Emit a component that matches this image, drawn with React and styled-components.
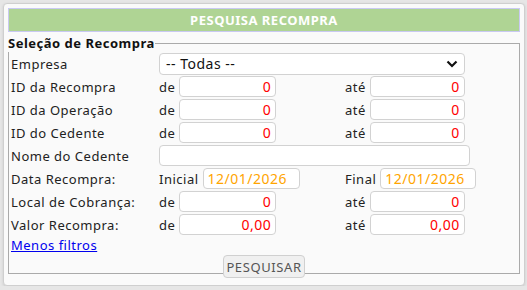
import React from "react";
import styled, { createGlobalStyle } from "styled-components";

const GlobalStyle = createGlobalStyle`
    html, body {
        margin: 0;
        padding: 0;
        background-color: #e6e6e6;
        font-family: "Noto Sans", "Open Sans", sans-serif;
        letter-spacing: 0.5px;
    }
`;

const Panel = styled.div`
    box-sizing: border-box;
    width: 522px;
    height: 283px;
    margin: 3px 0 0 3px;
    padding: 4px 4px 0 4px;
    background-color: #fafafa;
    border: 1px solid #cfcfcf;
    border-radius: 4px;
    box-shadow: 0 1px 3px rgba(0, 0, 0, 0.12);
`;

const Header = styled.div`
    box-sizing: border-box;
    height: 24px;
    line-height: 22px;
    background-color: #afd494;
    border: 1px solid #c9c9f2;
    text-align: center;
    color: white;
    font-size: 13px;
    font-weight: bold;
`;

const Fieldset = styled.fieldset`
    margin: 2px 0 0 0;
    padding: 0;
    height: 240px;
    box-sizing: border-box;
    border: 1px solid #aaaaaa;
    border-radius: 0;
`;

const Legend = styled.legend`
    padding: 0;
    margin-left: -1px;
    font-size: 13px;
    font-weight: bold;
    color: #111;
`;

const Grid = styled.div`
    display: grid;
    grid-template-columns: 148px 186px auto;
    grid-auto-rows: 23px;
    align-items: center;
    padding-left: 2px;
    font-size: 13px;
    color: #222;
`;

const Label = styled.div`
    padding-left: 0;
`;

const Cell = styled.div`
    display: flex;
    align-items: center;
    gap: 4px;
    grid-column: ${p => (p.$wide ? "2 / 4" : "auto")};
`;

const Field = styled.input`
    box-sizing: border-box;
    width: ${p => p.$w || 97}px;
    height: 21px;
    padding: 0 4px;
    border: 1px solid #d2d2d2;
    border-radius: 4px;
    background-color: white;
    font-family: inherit;
    letter-spacing: 0.5px;
    font-size: 14px;
    text-align: ${p => (p.$date ? "left" : "right")};
    color: ${p => (p.$date ? "#ffa500" : "#ff0000")};
    outline: none;
`;

const Select = styled.div`
    box-sizing: border-box;
    width: 306px;
    height: 22px;
    padding: 0 6px;
    display: flex;
    align-items: center;
    justify-content: space-between;
    border: 1px solid #d2d2d2;
    border-radius: 4px;
    background-color: white;
    font-size: 14px;
    color: #111;
`;

const LinkRow = styled.div`
    padding: 0 0 0 2px;
    font-size: 13px;
`;

const Link = styled.a`
    color: #0000ee;
    text-decoration: underline;
`;

const ButtonRow = styled.div`
    display: flex;
    justify-content: center;
    padding-top: 1px;
`;

const Button = styled.button`
    height: 23px;
    padding: 0 2px;
    font-family: inherit;
    letter-spacing: 0.6px;
    font-size: 13px;
    color: #555;
    background-color: #f0f0f0;
    border: 1px solid #d0d0d0;
    border-radius: 4px;
`;

const Chevron = () => (
    <svg width="12" height="8" viewBox="0 0 12 8">
        <path d="M1.5 1.5 L6 6 L10.5 1.5" fill="none" stroke="#111" strokeWidth="2.2" />
    </svg>
);

const rangeRows = [
    ["ID da Recompra", "0"],
    ["ID da Operação", "0"],
    ["ID do Cedente", "0"],
];

const App = () => {
    return (
        <>
            <GlobalStyle />
            <Panel>
                <Header>PESQUISA RECOMPRA</Header>
                <Fieldset>
                    <Legend>Seleção de Recompra</Legend>
                    <Grid>
                        <Label>Empresa</Label>
                        <Cell $wide>
                            <Select>
                                <span>-- Todas --</span>
                                <Chevron />
                            </Select>
                        </Cell>
                        {rangeRows.map(([label, value]) => (
                            <React.Fragment key={label}>
                                <Label>{label}</Label>
                                <Cell>de <Field defaultValue={value} /></Cell>
                                <Cell>até <Field $w={95} defaultValue={value} /></Cell>
                            </React.Fragment>
                        ))}
                        <Label>Nome do Cedente</Label>
                        <Cell $wide><Field $w={311} defaultValue="" /></Cell>
                        <Label>Data Recompra:</Label>
                        <Cell>Inicial <Field $date $w={97} defaultValue="12/01/2026" /></Cell>
                        <Cell>Final <Field $date $w={96} defaultValue="12/01/2026" /></Cell>
                        <Label>Local de Cobrança:</Label>
                        <Cell>de <Field defaultValue="0" /></Cell>
                        <Cell>até <Field $w={95} defaultValue="0" /></Cell>
                        <Label>Valor Recompra:</Label>
                        <Cell>de <Field defaultValue="0,00" /></Cell>
                        <Cell>até <Field $w={95} defaultValue="0,00" /></Cell>
                    </Grid>
                    <LinkRow><Link href="#">Menos filtros</Link></LinkRow>
                    <ButtonRow><Button>PESQUISAR</Button></ButtonRow>
                </Fieldset>
            </Panel>
        </>
    );
};

export default App;
